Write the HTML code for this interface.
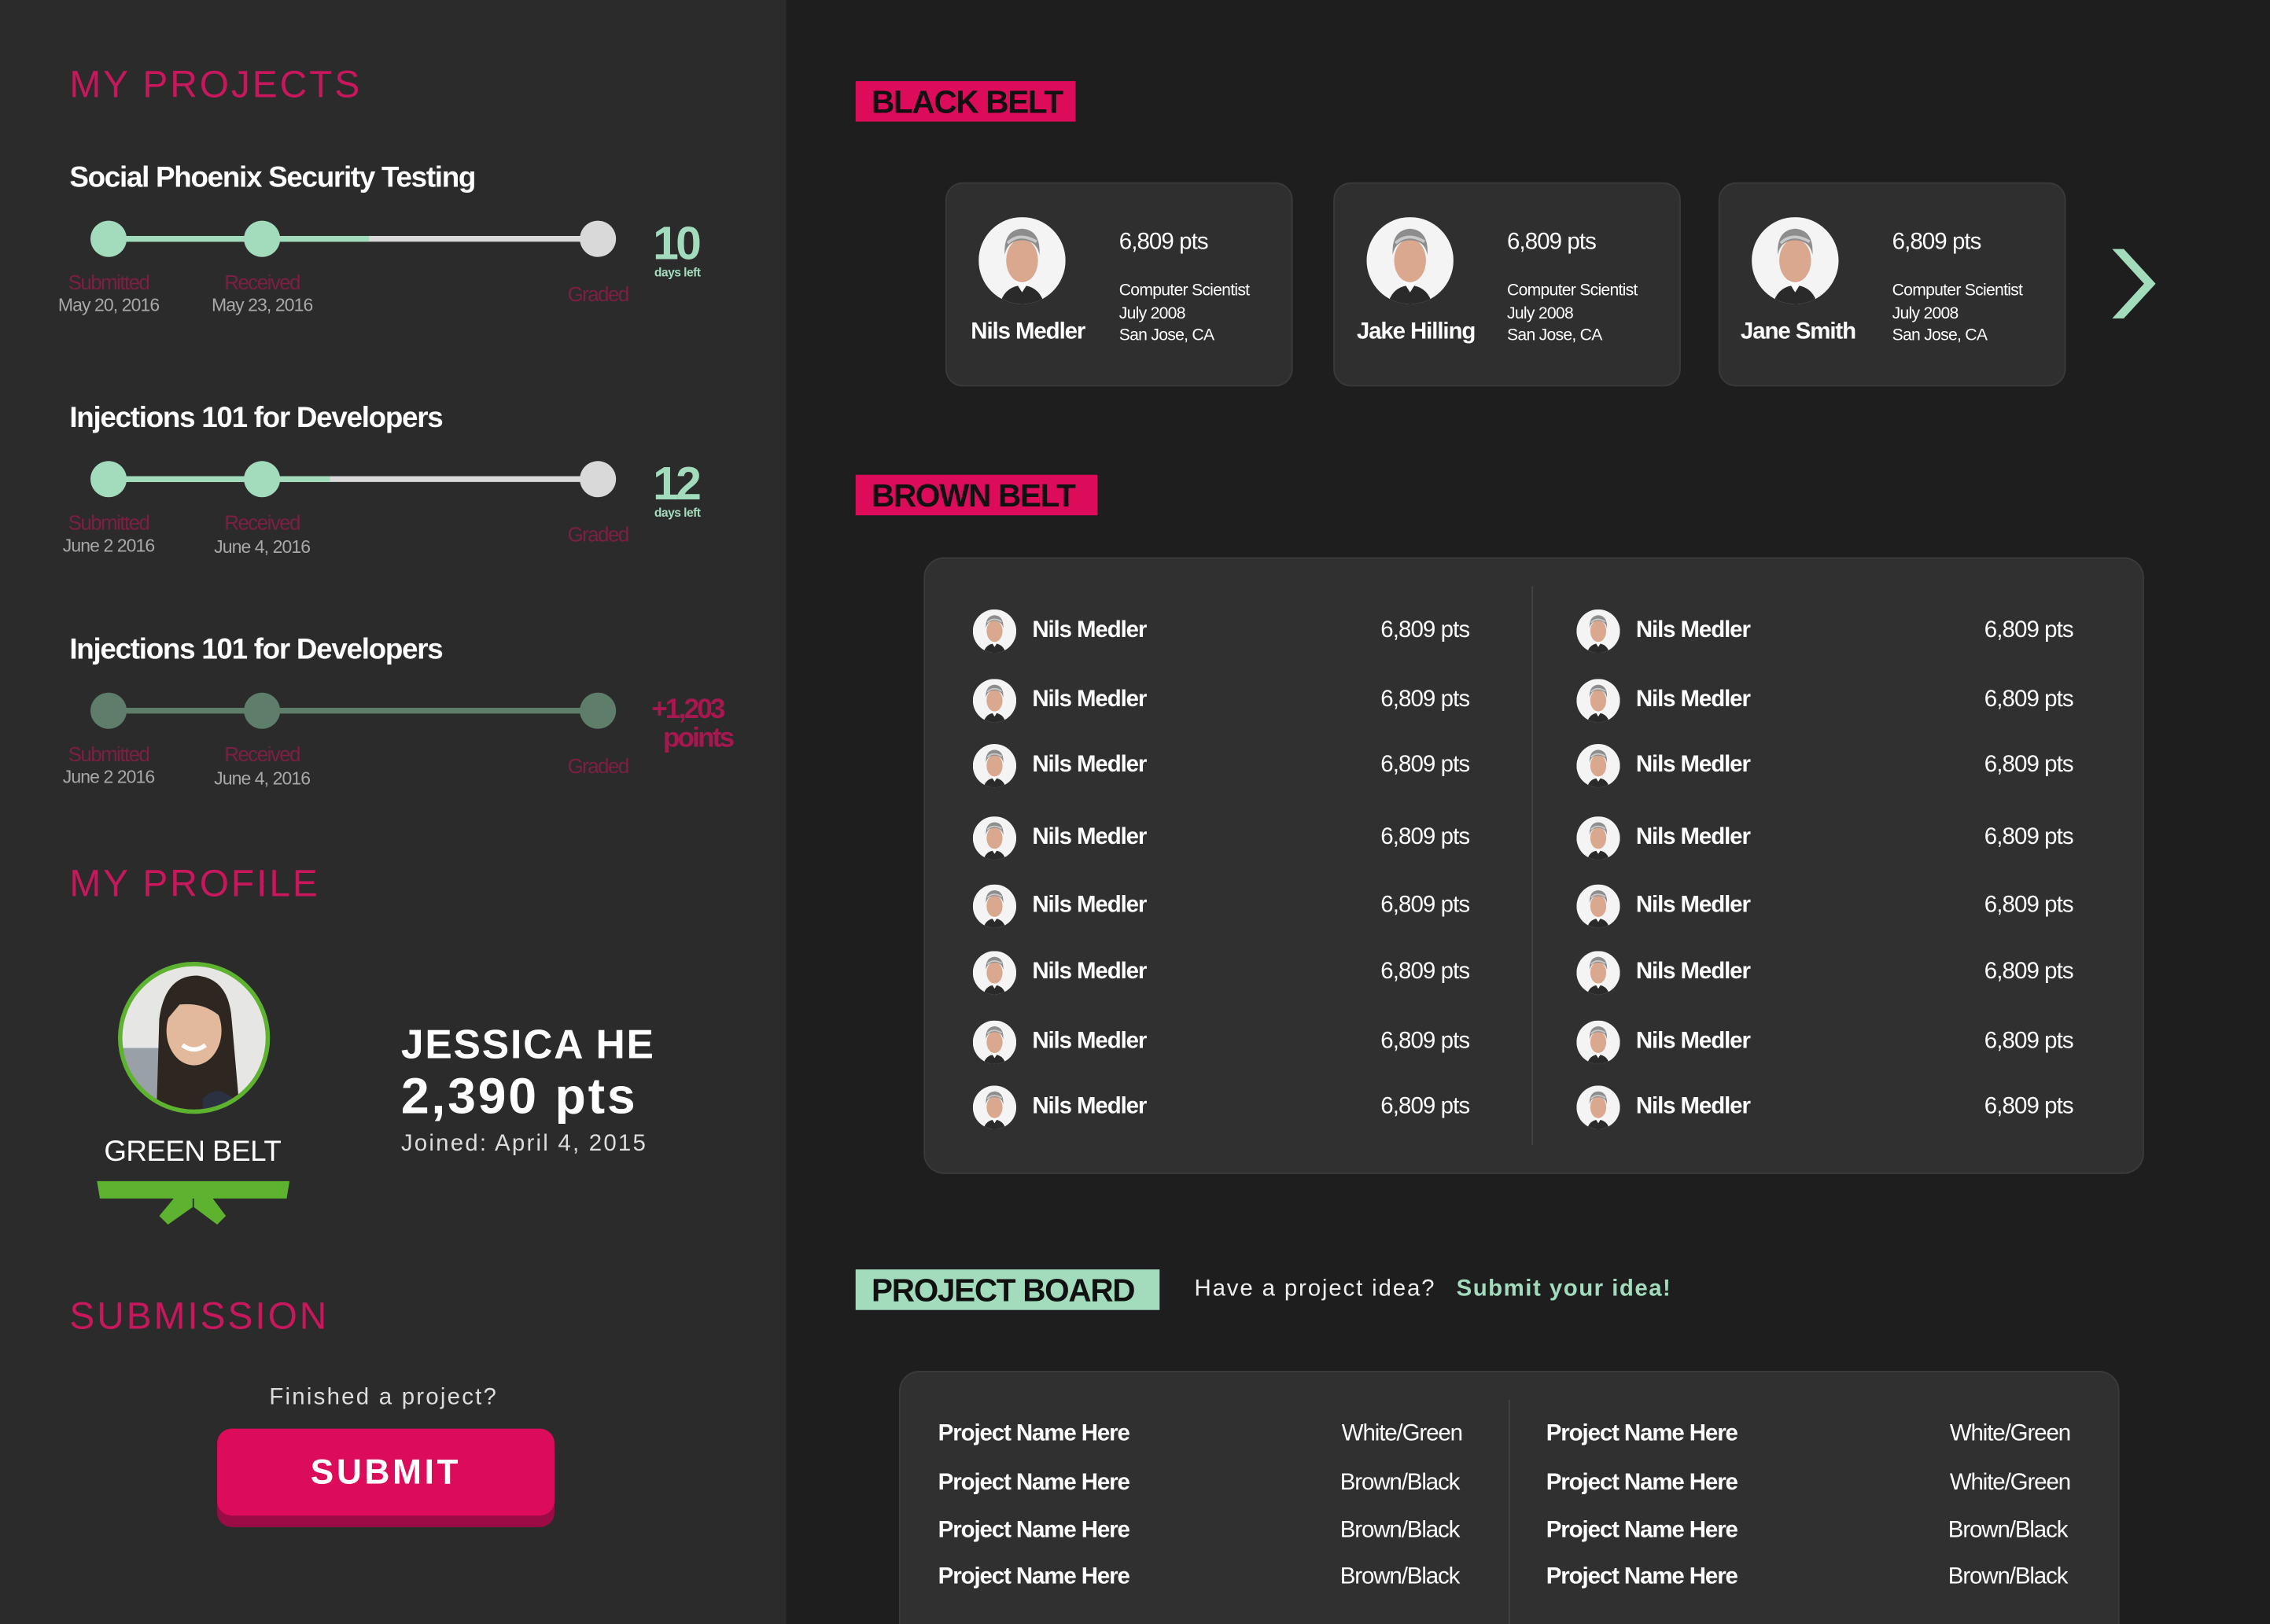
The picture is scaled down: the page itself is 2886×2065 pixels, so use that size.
<!DOCTYPE html>
<html><head><meta charset="utf-8">
<style>
html,body{margin:0;padding:0;background:#1e1e1e;}
html{width:2886px;height:2065px;overflow:hidden;}
body{width:2886px;height:2065px;overflow:hidden;position:relative;}
#w{position:absolute;left:0;top:0;width:1568px;height:1122px;overflow:hidden;transform:scale(1.84056);transform-origin:0 0;font-family:"Liberation Sans",sans-serif;color:#fff;}
.a{position:absolute;white-space:nowrap;}
div.a{margin-top:3px;}
.lp{position:absolute;left:0;top:0;width:543px;height:1122px;background:#2b2b2b;}
.h{color:#c8175d;font-size:26px;letter-spacing:1.6px;font-weight:300;}
.pt{font-size:20px;font-weight:bold;letter-spacing:-0.7px;}
.lab{color:#7d1f44;font-size:14px;letter-spacing:-0.8px;transform:translateX(-50%);}
.dt{color:#a8a8a8;font-size:12.5px;letter-spacing:-0.5px;transform:translateX(-50%);}
.tag{position:absolute;height:28px;color:#111;font-weight:bold;font-size:22px;line-height:29px;padding-left:11px;letter-spacing:-0.7px;}
.card{position:absolute;top:126px;width:240px;height:141px;background:#2f2f2f;border:1.5px solid #3a3a3a;border-radius:12px;box-sizing:border-box;}
.panel{position:absolute;background:#303030;border:1.5px solid #3b3b3b;border-radius:14px;box-sizing:border-box;}
.nm{font-size:16px;font-weight:bold;letter-spacing:-0.6px;}
.ps{font-size:16px;letter-spacing:-0.5px;}
.pn{font-size:16px;font-weight:bold;letter-spacing:-0.6px;}
.bl{font-size:16px;letter-spacing:-0.6px;}
</style></head><body>
<svg width="0" height="0" style="position:absolute">
<defs>
<symbol id="face" viewBox="0 0 60 60">
<clipPath id="cc"><circle cx="30" cy="30" r="30"/></clipPath>
<g clip-path="url(#cc)">
<rect width="60" height="60" fill="#f4f4f4"/>
<path d="M14 64 Q16 48 30 47 Q44 48 46 64Z" fill="#2a2a2a"/>
<path d="M25 44 L30 52 L35 44 Z" fill="#fff"/>
<ellipse cx="30" cy="30" rx="11" ry="15" fill="#d9a88e"/>
<path d="M18 26 Q17 9 30 8 Q43 9 42 26 Q40 16 30 16 Q20 16 18 26Z" fill="#8d8d8d"/>
<path d="M20 18 Q28 10 40 17" stroke="#c8c8c8" stroke-width="2" fill="none"/>
</g>
</symbol>
</defs></svg>
<div id="w">
<div class="lp"></div>

<div class="a h" style="left:48px;top:40px;">MY PROJECTS</div>

<div class="a pt" style="left:48px;top:109px;">Social Phoenix Security Testing</div>
<svg class="a" style="left:0;top:140px" width="543" height="50">
<line x1="75" y1="25" x2="413" y2="25" stroke="#d9d9d9" stroke-width="4"/>
<line x1="75" y1="25" x2="255" y2="25" stroke="#a3dcbc" stroke-width="4"/>
<circle cx="75" cy="25" r="12.5" fill="#a3dcbc"/><circle cx="181" cy="25" r="12.5" fill="#a3dcbc"/><circle cx="413" cy="25" r="12.5" fill="#d9d9d9"/>
</svg>
<div class="a lab" style="left:75px;top:184px;">Submitted</div>
<div class="a dt" style="left:75px;top:201px;">May 20, 2016</div>
<div class="a lab" style="left:181px;top:184px;">Received</div>
<div class="a dt" style="left:181px;top:201px;">May 23, 2016</div>
<div class="a lab" style="left:413px;top:192px;">Graded</div>
<div class="a" style="left:451px;top:147px;color:#a3dcbc;font-size:32px;font-weight:bold;letter-spacing:-2px;">10</div>
<div class="a" style="left:452px;top:180px;color:#a3dcbc;font-size:8.5px;font-weight:bold;letter-spacing:-0.3px;">days left</div>

<div class="a pt" style="left:48px;top:275px;">Injections 101 for Developers</div>
<svg class="a" style="left:0;top:306px" width="543" height="50">
<line x1="75" y1="25" x2="413" y2="25" stroke="#d9d9d9" stroke-width="4"/>
<line x1="75" y1="25" x2="228" y2="25" stroke="#a3dcbc" stroke-width="4"/>
<circle cx="75" cy="25" r="12.5" fill="#a3dcbc"/><circle cx="181" cy="25" r="12.5" fill="#a3dcbc"/><circle cx="413" cy="25" r="12.5" fill="#d9d9d9"/>
</svg>
<div class="a lab" style="left:75px;top:350px;">Submitted</div>
<div class="a dt" style="left:75px;top:367px;">June 2 2016</div>
<div class="a lab" style="left:181px;top:350px;">Received</div>
<div class="a dt" style="left:181px;top:368px;">June 4, 2016</div>
<div class="a lab" style="left:413px;top:358px;">Graded</div>
<div class="a" style="left:451px;top:313px;color:#a3dcbc;font-size:32px;font-weight:bold;letter-spacing:-2px;">12</div>
<div class="a" style="left:452px;top:346px;color:#a3dcbc;font-size:8.5px;font-weight:bold;letter-spacing:-0.3px;">days left</div>

<div class="a pt" style="left:48px;top:435px;">Injections 101 for Developers</div>
<svg class="a" style="left:0;top:466px" width="543" height="50">
<line x1="75" y1="25" x2="413" y2="25" stroke="#5f7d6b" stroke-width="4"/>
<circle cx="75" cy="25" r="12.5" fill="#5f7d6b"/><circle cx="181" cy="25" r="12.5" fill="#5f7d6b"/><circle cx="413" cy="25" r="12.5" fill="#5f7d6b"/>
</svg>
<div class="a lab" style="left:75px;top:510px;">Submitted</div>
<div class="a dt" style="left:75px;top:527px;">June 2 2016</div>
<div class="a lab" style="left:181px;top:510px;">Received</div>
<div class="a dt" style="left:181px;top:528px;">June 4, 2016</div>
<div class="a lab" style="left:413px;top:518px;">Graded</div>
<div class="a" style="left:450px;top:477px;color:#a8174f;font-size:19px;font-weight:bold;letter-spacing:-1.5px;">+1,203</div>
<div class="a" style="left:458px;top:497px;color:#a8174f;font-size:19px;font-weight:bold;letter-spacing:-1.5px;">points</div>

<div class="a h" style="left:48px;top:592px;">MY PROFILE</div>
<svg class="a" style="left:80px;top:664px" width="108" height="108">
<clipPath id="jc"><circle cx="54" cy="53" r="50"/></clipPath>
<g clip-path="url(#jc)">
<rect width="108" height="108" fill="#e6e6e4"/>
<rect x="0" y="60" width="30" height="48" fill="#9aa0a8"/>
<path d="M28 108 L30 40 Q34 10 56 10 Q78 12 80 40 L86 108Z" fill="#2e2620"/>
<ellipse cx="54" cy="48" rx="19" ry="24" fill="#e2b99c"/>
<path d="M34 42 Q40 18 60 20 Q74 24 74 40 Q62 28 44 30Z" fill="#2e2620"/>
<path d="M46 58 Q54 64 62 58" stroke="#fff" stroke-width="3" fill="none"/>
<path d="M60 95 Q75 80 90 108 L60 108Z" fill="#2b3140"/>
</g>
<circle cx="54" cy="53" r="51" fill="none" stroke="#5db32f" stroke-width="3"/>
</svg>
<div class="a" style="left:133px;top:782px;transform:translateX(-50%);font-size:20px;letter-spacing:-0.3px;">GREEN BELT</div>
<svg class="a" style="left:60px;top:812px" width="150" height="40">
<path d="M7 4 L140 4 L138 16 L9 16Z" fill="#5db32f"/>
<path d="M60 16 L73 16 L73 22 L56 34 L50 28Z" fill="#5db32f"/>
<path d="M87 16 L74 16 L74 22 L90 34 L96 28Z" fill="#5db32f"/>
</svg>
<div class="a" style="left:277px;top:703px;font-size:28px;font-weight:bold;letter-spacing:1px;">JESSICA HE</div>
<div class="a" style="left:277px;top:735px;font-size:35px;font-weight:bold;letter-spacing:1.5px;">2,390 pts</div>
<div class="a" style="left:277px;top:779px;font-size:16px;letter-spacing:1.2px;color:#ddd;">Joined: April 4, 2015</div>

<div class="a h" style="left:48px;top:891px;">SUBMISSION</div>
<div class="a" style="left:265px;top:954px;transform:translateX(-50%);font-size:16px;letter-spacing:1.2px;color:#ddd;">Finished a project?</div>
<div class="a" style="left:150px;top:993px;width:233px;height:62px;background:#9b0c45;border-radius:10px;margin-top:0;"></div>
<div class="a" style="left:150px;top:987px;width:233px;height:60px;background:#dc0c5b;border-radius:10px;text-align:center;line-height:62px;font-size:24px;font-weight:bold;letter-spacing:2px;margin-top:0;">SUBMIT</div>

<div class="tag" style="left:591px;top:56px;width:141px;background:#dc0c5b;">BLACK BELT</div>

<div class="card" style="left:653px;"></div>
<div class="card" style="left:921px;"></div>
<div class="card" style="left:1187px;"></div>
<svg class="a" style="left:676px;top:150px" width="60" height="60"><use href="#face"/></svg>
<svg class="a" style="left:944px;top:150px" width="60" height="60"><use href="#face"/></svg>
<svg class="a" style="left:1210px;top:150px" width="60" height="60"><use href="#face"/></svg>
<div class="a nm" style="left:710px;top:218px;transform:translateX(-50%);">Nils Medler</div>
<div class="a nm" style="left:978px;top:218px;transform:translateX(-50%);">Jake Hilling</div>
<div class="a nm" style="left:1242px;top:218px;transform:translateX(-50%);">Jane Smith</div>
<div class="a" style="left:773px;top:156px;font-size:16px;letter-spacing:-0.5px;">6,809 pts</div>
<div class="a" style="left:773px;top:191px;font-size:11.5px;line-height:15.5px;letter-spacing:-0.4px;">Computer Scientist<br>July 2008<br>San Jose, CA</div>
<div class="a" style="left:1041px;top:156px;font-size:16px;letter-spacing:-0.5px;">6,809 pts</div>
<div class="a" style="left:1041px;top:191px;font-size:11.5px;line-height:15.5px;letter-spacing:-0.4px;">Computer Scientist<br>July 2008<br>San Jose, CA</div>
<div class="a" style="left:1307px;top:156px;font-size:16px;letter-spacing:-0.5px;">6,809 pts</div>
<div class="a" style="left:1307px;top:191px;font-size:11.5px;line-height:15.5px;letter-spacing:-0.4px;">Computer Scientist<br>July 2008<br>San Jose, CA</div>
<svg class="a" style="left:1455px;top:170px" width="40" height="54"><path d="M4 2 L12 2 L34 26 L12 50 L4 50 L26 26Z" fill="#a3dcbc"/></svg>

<div class="tag" style="left:591px;top:328px;width:156px;background:#dc0c5b;">BROWN BELT</div>
<div class="panel" style="left:638px;top:385px;width:843px;height:426px;margin-top:0;"></div>
<div class="a" style="left:1058px;top:405px;width:1px;height:386px;background:#444;margin-top:0;"></div>

<svg class="a" style="left:672px;top:421px" width="30" height="30"><use href="#face"/></svg><div class="a nm" style="left:713px;top:424px;">Nils Medler</div><div class="a ps" style="right:553px;top:424px;">6,809 pts</div>
<svg class="a" style="left:1089px;top:421px" width="30" height="30"><use href="#face"/></svg><div class="a nm" style="left:1130px;top:424px;">Nils Medler</div><div class="a ps" style="right:136px;top:424px;">6,809 pts</div>
<svg class="a" style="left:672px;top:469px" width="30" height="30"><use href="#face"/></svg><div class="a nm" style="left:713px;top:472px;">Nils Medler</div><div class="a ps" style="right:553px;top:472px;">6,809 pts</div>
<svg class="a" style="left:1089px;top:469px" width="30" height="30"><use href="#face"/></svg><div class="a nm" style="left:1130px;top:472px;">Nils Medler</div><div class="a ps" style="right:136px;top:472px;">6,809 pts</div>
<svg class="a" style="left:672px;top:514px" width="30" height="30"><use href="#face"/></svg><div class="a nm" style="left:713px;top:517px;">Nils Medler</div><div class="a ps" style="right:553px;top:517px;">6,809 pts</div>
<svg class="a" style="left:1089px;top:514px" width="30" height="30"><use href="#face"/></svg><div class="a nm" style="left:1130px;top:517px;">Nils Medler</div><div class="a ps" style="right:136px;top:517px;">6,809 pts</div>
<svg class="a" style="left:672px;top:564px" width="30" height="30"><use href="#face"/></svg><div class="a nm" style="left:713px;top:567px;">Nils Medler</div><div class="a ps" style="right:553px;top:567px;">6,809 pts</div>
<svg class="a" style="left:1089px;top:564px" width="30" height="30"><use href="#face"/></svg><div class="a nm" style="left:1130px;top:567px;">Nils Medler</div><div class="a ps" style="right:136px;top:567px;">6,809 pts</div>
<svg class="a" style="left:672px;top:611px" width="30" height="30"><use href="#face"/></svg><div class="a nm" style="left:713px;top:614px;">Nils Medler</div><div class="a ps" style="right:553px;top:614px;">6,809 pts</div>
<svg class="a" style="left:1089px;top:611px" width="30" height="30"><use href="#face"/></svg><div class="a nm" style="left:1130px;top:614px;">Nils Medler</div><div class="a ps" style="right:136px;top:614px;">6,809 pts</div>
<svg class="a" style="left:672px;top:657px" width="30" height="30"><use href="#face"/></svg><div class="a nm" style="left:713px;top:660px;">Nils Medler</div><div class="a ps" style="right:553px;top:660px;">6,809 pts</div>
<svg class="a" style="left:1089px;top:657px" width="30" height="30"><use href="#face"/></svg><div class="a nm" style="left:1130px;top:660px;">Nils Medler</div><div class="a ps" style="right:136px;top:660px;">6,809 pts</div>
<svg class="a" style="left:672px;top:705px" width="30" height="30"><use href="#face"/></svg><div class="a nm" style="left:713px;top:708px;">Nils Medler</div><div class="a ps" style="right:553px;top:708px;">6,809 pts</div>
<svg class="a" style="left:1089px;top:705px" width="30" height="30"><use href="#face"/></svg><div class="a nm" style="left:1130px;top:708px;">Nils Medler</div><div class="a ps" style="right:136px;top:708px;">6,809 pts</div>
<svg class="a" style="left:672px;top:750px" width="30" height="30"><use href="#face"/></svg><div class="a nm" style="left:713px;top:753px;">Nils Medler</div><div class="a ps" style="right:553px;top:753px;">6,809 pts</div>
<svg class="a" style="left:1089px;top:750px" width="30" height="30"><use href="#face"/></svg><div class="a nm" style="left:1130px;top:753px;">Nils Medler</div><div class="a ps" style="right:136px;top:753px;">6,809 pts</div>

<div class="tag" style="left:591px;top:877px;width:199px;background:#a3dcbc;">PROJECT BOARD</div>
<div class="a" style="left:825px;top:879px;font-size:16px;letter-spacing:1px;color:#eee;">Have a project idea?</div>
<div class="a" style="left:1006px;top:879px;font-size:16px;letter-spacing:0.8px;color:#a3dcbc;font-weight:bold;">Submit your idea!</div>

<div class="panel" style="left:621px;top:947px;width:843px;height:175px;margin-top:0;border-bottom:none;border-radius:14px 14px 0 0;"></div>
<div class="a" style="left:1042px;top:967px;width:1px;height:155px;background:#444;margin-top:0;"></div>
<div class="a pn" style="left:648px;top:979px;">Project Name Here</div><div class="a bl" style="right:558px;top:979px;">White/Green</div>
<div class="a pn" style="left:1068px;top:979px;">Project Name Here</div><div class="a bl" style="right:138px;top:979px;">White/Green</div>
<div class="a pn" style="left:648px;top:1013px;">Project Name Here</div><div class="a bl" style="right:560px;top:1013px;">Brown/Black</div>
<div class="a pn" style="left:1068px;top:1013px;">Project Name Here</div><div class="a bl" style="right:138px;top:1013px;">White/Green</div>
<div class="a pn" style="left:648px;top:1046px;">Project Name Here</div><div class="a bl" style="right:560px;top:1046px;">Brown/Black</div>
<div class="a pn" style="left:1068px;top:1046px;">Project Name Here</div><div class="a bl" style="right:140px;top:1046px;">Brown/Black</div>
<div class="a pn" style="left:648px;top:1078px;">Project Name Here</div><div class="a bl" style="right:560px;top:1078px;">Brown/Black</div>
<div class="a pn" style="left:1068px;top:1078px;">Project Name Here</div><div class="a bl" style="right:140px;top:1078px;">Brown/Black</div>
</div>
</body></html>
